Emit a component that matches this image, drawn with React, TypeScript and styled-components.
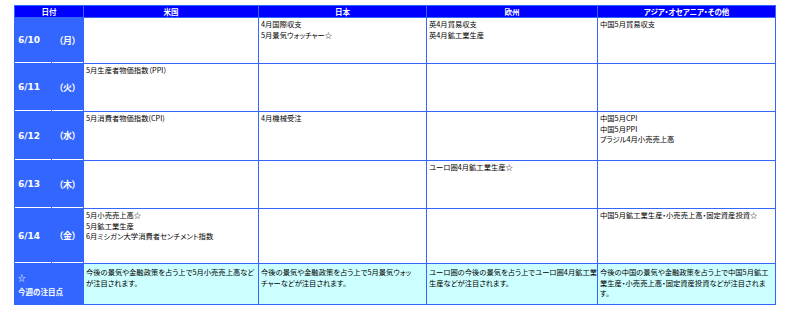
import React from "react";
import styled, { createGlobalStyle } from "styled-components";

const GlobalStyle = createGlobalStyle`
  body {
    margin: 0;
    background: #ffffff;
    font-family: "Noto Sans CJK JP", "Liberation Sans", sans-serif;
  }
`;

interface DayRow {
  date: string
  weekday: string
  height: number
  cells: string[][]
}

const columns = ["米国", "日本", "欧州", "アジア・オセアニア・その他"];
const colWidths = [36, 31, 174, 167, 170, 177];

const days: DayRow[] = [
  {
    date: "6/10",
    weekday: "（月）",
    height: 45,
    cells: [[], ["4月国際収支", "5月景気ウォッチャー☆"], ["英4月貿易収支", "英4月鉱工業生産"], ["中国5月貿易収支"]],
  },
  {
    date: "6/11",
    weekday: "（火）",
    height: 47,
    cells: [["5月生産者物価指数（PPI）"], [], [], []],
  },
  {
    date: "6/12",
    weekday: "（水）",
    height: 48,
    cells: [["5月消費者物価指数(CPI)"], ["4月機械受注"], [], ["中国5月CPI", "中国5月PPI", "ブラジル4月小売売上高"]],
  },
  {
    date: "6/13",
    weekday: "（木）",
    height: 47,
    cells: [[], [], ["ユーロ圏4月鉱工業生産☆"], []],
  },
  {
    date: "6/14",
    weekday: "（金）",
    height: 54,
    cells: [
      ["5月小売売上高☆", "5月鉱工業生産", "6月ミシガン大学消費者センチメント指数"],
      [],
      [],
      ["中国5月鉱工業生産・小売売上高・固定資産投資☆"],
    ],
  },
];

// line breaks follow the original layout
const notes = [
  ["今後の景気や金融政策を占う上で5月小売売上高など", "が注目されます。"],
  ["今後の景気や金融政策を占う上で5月景気ウォッ", "チャーなどが注目されます。"],
  ["ユーロ圏の今後の景気を占う上でユーロ圏4月鉱工業", "生産などが注目されます。"],
  ["今後の中国の景気や金融政策を占う上で中国5月鉱工", "業生産・小売売上高・固定資産投資などが注目されま", "す。"],
];

const App: React.FC = (): React.ReactElement => {
  return (
    <>
      <GlobalStyle />
      <Schedule>
        <colgroup>
          {colWidths.map((w, i) => (
            <col key={i} style={{ width: w }} />
          ))}
        </colgroup>
        <thead>
          <Row $height={11}>
            <HeadCell colSpan={2}>日付</HeadCell>
            {columns.map((name) => (
              <HeadCell key={name}>{name}</HeadCell>
            ))}
          </Row>
        </thead>
        <tbody>
          {days.map((day) => (
            <Row key={day.date} $height={day.height}>
              <DateCell>{day.date}</DateCell>
              <DateCell $center>{day.weekday}</DateCell>
              {day.cells.map((lines, i) => (
                <EventCell key={i}>
                  {lines.map((line) => (
                    <Line key={line}>{line}</Line>
                  ))}
                </EventCell>
              ))}
            </Row>
          ))}
          <Row $height={40}>
            <NoteHead colSpan={2}>
              <Line>☆</Line>
              <Line>今週の注目点</Line>
            </NoteHead>
            {notes.map((lines, i) => (
              <EventCell key={i} $note>
                {lines.map((line) => (
                  <Line key={line}>{line}</Line>
                ))}
              </EventCell>
            ))}
          </Row>
        </tbody>
      </Schedule>
    </>
  );
};

const Schedule = styled.table`
  margin: 5px 0 0 14px;
  width: 762px;
  table-layout: fixed;
  border-collapse: separate;
  border-spacing: 1px;
  background-color: #3366ff;
  font-family: "Noto Sans CJK JP", "Liberation Sans", sans-serif;
`;

const Row = styled.tr<{ $height: number }>`
  height: ${(p) => p.$height}px;
`;

const HeadCell = styled.th`
  padding: 0;
  background-color: #0000ff;
  color: #ffffff;
  font-size: 7.5px;
  font-weight: 700;
  line-height: 10px;
  text-align: center;
  font-feature-settings: "palt";
`;

const DateCell = styled.td<{ $center?: boolean }>`
  padding: 0 0 0 ${(p) => (p.$center ? 0 : 3)}px;
  background-color: #3366ff;
  border-bottom: 1px solid #ffffff;
  color: #ffffff;
  font-family: "DejaVu Sans", "Noto Sans CJK JP", sans-serif;
  font-size: 9px;
  font-weight: 700;
  text-align: ${(p) => (p.$center ? "center" : "left")};
  vertical-align: middle;
  white-space: nowrap;
  font-feature-settings: "palt";
`;

const NoteHead = styled.td`
  padding: 2px 0 0 3px;
  background-color: #3366ff;
  color: #ffffff;
  font-size: 7.5px;
  font-weight: 700;
  line-height: 14px;
  vertical-align: middle;
`;

const EventCell = styled.td<{ $note?: boolean }>`
  padding: ${(p) => (p.$note ? 3 : 1)}px 2px 0 2px;
  background-color: ${(p) => (p.$note ? "#ccffff" : "#ffffff")};
  color: #000000;
  font-size: 7.3px;
  line-height: 10.5px;
  vertical-align: top;
  overflow: hidden;
  font-feature-settings: "palt";
`;

const Line = styled.div`
  white-space: nowrap;
`;

export default App;
